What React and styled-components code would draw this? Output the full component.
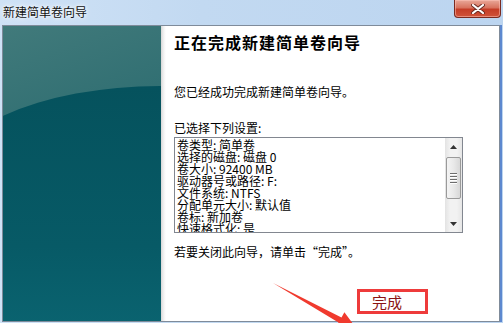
import styled, { createGlobalStyle } from "styled-components";

const Global = createGlobalStyle`
  html, body { margin: 0; padding: 0; }
  body {
    width: 503px;
    height: 323px;
    overflow: hidden;
    font-family: "Noto Sans CJK SC", sans-serif;
    color: #000;
  }
`;

const Window = styled.div`
  position: relative;
  width: 503px;
  height: 323px;
  display: flex;
  flex-direction: column;
  background: linear-gradient(90deg, #cfe2f6 0%, #c2d9f1 40%, #bcd5f0 100%);
  overflow: hidden;
`;

const TitleBar = styled.div`
  height: 25px;
  display: flex;
  justify-content: space-between;
  align-items: flex-start;
  flex-shrink: 0;
`;

const Title = styled.div`
  padding: 5px 0 0 3px;
  font-size: 12px;
  line-height: 14px;
  color: #111;
  text-shadow: 0 0 6px #fff, 0 0 3px #fff;
`;

const CloseButton = styled.div`
  width: 45px;
  height: 17px;
  margin-right: 2px;
  border: 1px solid #7a2a20;
  border-top: none;
  border-radius: 0 0 4px 4px;
  background: linear-gradient(180deg, #e9a899 0%, #d8735f 45%, #c53d27 55%, #d0533a 100%);
  display: flex;
  align-items: center;
  justify-content: center;
  box-shadow: inset 0 0 0 1px rgba(255, 200, 190, 0.5);
`;

const Frame = styled.div`
  flex: 1;
  display: flex;
  margin: 0 3px 1px 2px;
  border: 1px solid #7f8b9a;
  background: #fff;
  box-shadow: 2px 0 0 #5d88cf;
`;

const Side = styled.div`
  position: relative;
  width: 158px;
  flex-shrink: 0;
  overflow: hidden;
  background: linear-gradient(160deg, #417a7b 0%, #2c6c70 45%, #1b6068 100%);

  &::before {
    content: "";
    position: absolute;
    left: -63px;
    top: 60px;
    width: 440px;
    height: 400px;
    border-radius: 220px 220px 0 0 / 100px 100px 0 0;
    background: linear-gradient(180deg, #05525d 0%, #075a66 40%, #0c6a77 75%, #0f7179 100%);
  }
`;

const Main = styled.div`
  flex: 1;
  display: flex;
  flex-direction: column;
  padding: 6px 0 0 13px;
  background: linear-gradient(90deg, #d6d6d6 0, #ececec 2px, #fafafa 4px, #fff 5px);
`;

const Heading = styled.h1`
  margin: 0;
  font-size: 16px;
  line-height: 20px;
  font-weight: 700;
  letter-spacing: 1px;
`;

const Text = styled.p`
  margin: ${(p) => p.$top}px 0 0;
  font-size: 12px;
  line-height: 14px;
`;

const ListBox = styled.div`
  margin-top: 2px;
  width: 287px;
  height: 94px;
  border: 1px solid #828790;
  display: flex;
`;

const ListContent = styled.div`
  flex: 1;
  overflow: hidden;
  padding: 1px 0 0 2px;
  font-size: 12px;
  line-height: 12px;
  white-space: pre;
`;

const ListLine = styled.div`
  height: 12px;
`;

const ScrollBar = styled.div`
  width: 17px;
  display: flex;
  flex-direction: column;
  background: linear-gradient(90deg, #e3e3e3 0%, #f2f2f2 30%, #f2f2f2 70%, #e6e6e6 100%);
`;

const ScrollArrow = styled.div`
  height: 17px;
  display: flex;
  align-items: center;
  justify-content: center;
`;

const ScrollTrack = styled.div`
  flex: 1;
  padding-top: 2px;
`;

const Thumb = styled.div`
  margin: 0 1px;
  height: 40px;
  border: 1px solid #9a9a9a;
  border-radius: 2px;
  background: linear-gradient(90deg, #f4f4f4 0%, #e9e9e9 50%, #d8d8d8 100%);
  display: flex;
  flex-direction: column;
  align-items: center;
  justify-content: center;
  gap: 2px;
`;

const Grip = styled.span`
  width: 7px;
  height: 1px;
  background: #6d6d6d;
  box-shadow: 0 1px 0 #fff;
`;

const ButtonRow = styled.div`
  margin-top: 30px;
  display: flex;
  justify-content: flex-end;
  padding-right: 71px;
`;

const FinishButton = styled.div`
  width: 65px;
  height: 19px;
  border: 3px solid #ee3b3b;
  display: flex;
  align-items: center;
  padding-left: 12px;
  box-sizing: content-box;
  width: 53px;
  font-size: 15px;
  line-height: 19px;
  color: #8a1414;
`;

const Overlay = styled.svg`
  position: absolute;
  left: 0;
  top: 0;
  pointer-events: none;
`;

const settings = [
  "卷类型: 简单卷",
  "选择的磁盘: 磁盘 0",
  "卷大小: 92400 MB",
  "驱动器号或路径: F:",
  "文件系统: NTFS",
  "分配单元大小: 默认值",
  "卷标: 新加卷",
  "快速格式化: 是",
];

export default function App() {
  return (
    <Window>
      <Global />
      <TitleBar>
        <Title>新建简单卷向导</Title>
        <CloseButton>
          <svg width="14" height="10" viewBox="0 0 14 10">
            <path d="M2 1 L12 9 M12 1 L2 9" stroke="#6b2c24" strokeWidth="4" strokeLinecap="round" />
            <path d="M2 1 L12 9 M12 1 L2 9" stroke="#fff" strokeWidth="2.2" strokeLinecap="round" />
          </svg>
        </CloseButton>
      </TitleBar>
      <Frame>
        <Side />
        <Main>
          <Heading>正在完成新建简单卷向导</Heading>
          <Text $top={33}>您已经成功完成新建简单卷向导。</Text>
          <Text $top={22}>已选择下列设置:</Text>
          <ListBox>
            <ListContent>
              {settings.map((s) => (
                <ListLine key={s}>{s}</ListLine>
              ))}
            </ListContent>
            <ScrollBar>
              <ScrollArrow>
                <svg width="7" height="4" viewBox="0 0 7 4">
                  <path d="M3.5 0 L7 4 L0 4 Z" fill="#333" />
                </svg>
              </ScrollArrow>
              <ScrollTrack>
                <Thumb>
                  <Grip />
                  <Grip />
                  <Grip />
                  <Grip />
                </Thumb>
              </ScrollTrack>
              <ScrollArrow>
                <svg width="7" height="4" viewBox="0 0 7 4">
                  <path d="M0 0 L7 0 L3.5 4 Z" fill="#333" />
                </svg>
              </ScrollArrow>
            </ScrollBar>
          </ListBox>
          <Text $top={12}>若要关闭此向导，请单击“完成”。</Text>
          <ButtonRow>
            <FinishButton>完成</FinishButton>
          </ButtonRow>
        </Main>
      </Frame>
      <Overlay width="503" height="323" viewBox="0 0 503 323">
        <polygon
          points="273,283 341.5,317.4 344.4,312.2 357.4,329.8 335.6,327.8 338.5,322.6"
          fill="#f03a2e"
        />
      </Overlay>
    </Window>
  );
}
